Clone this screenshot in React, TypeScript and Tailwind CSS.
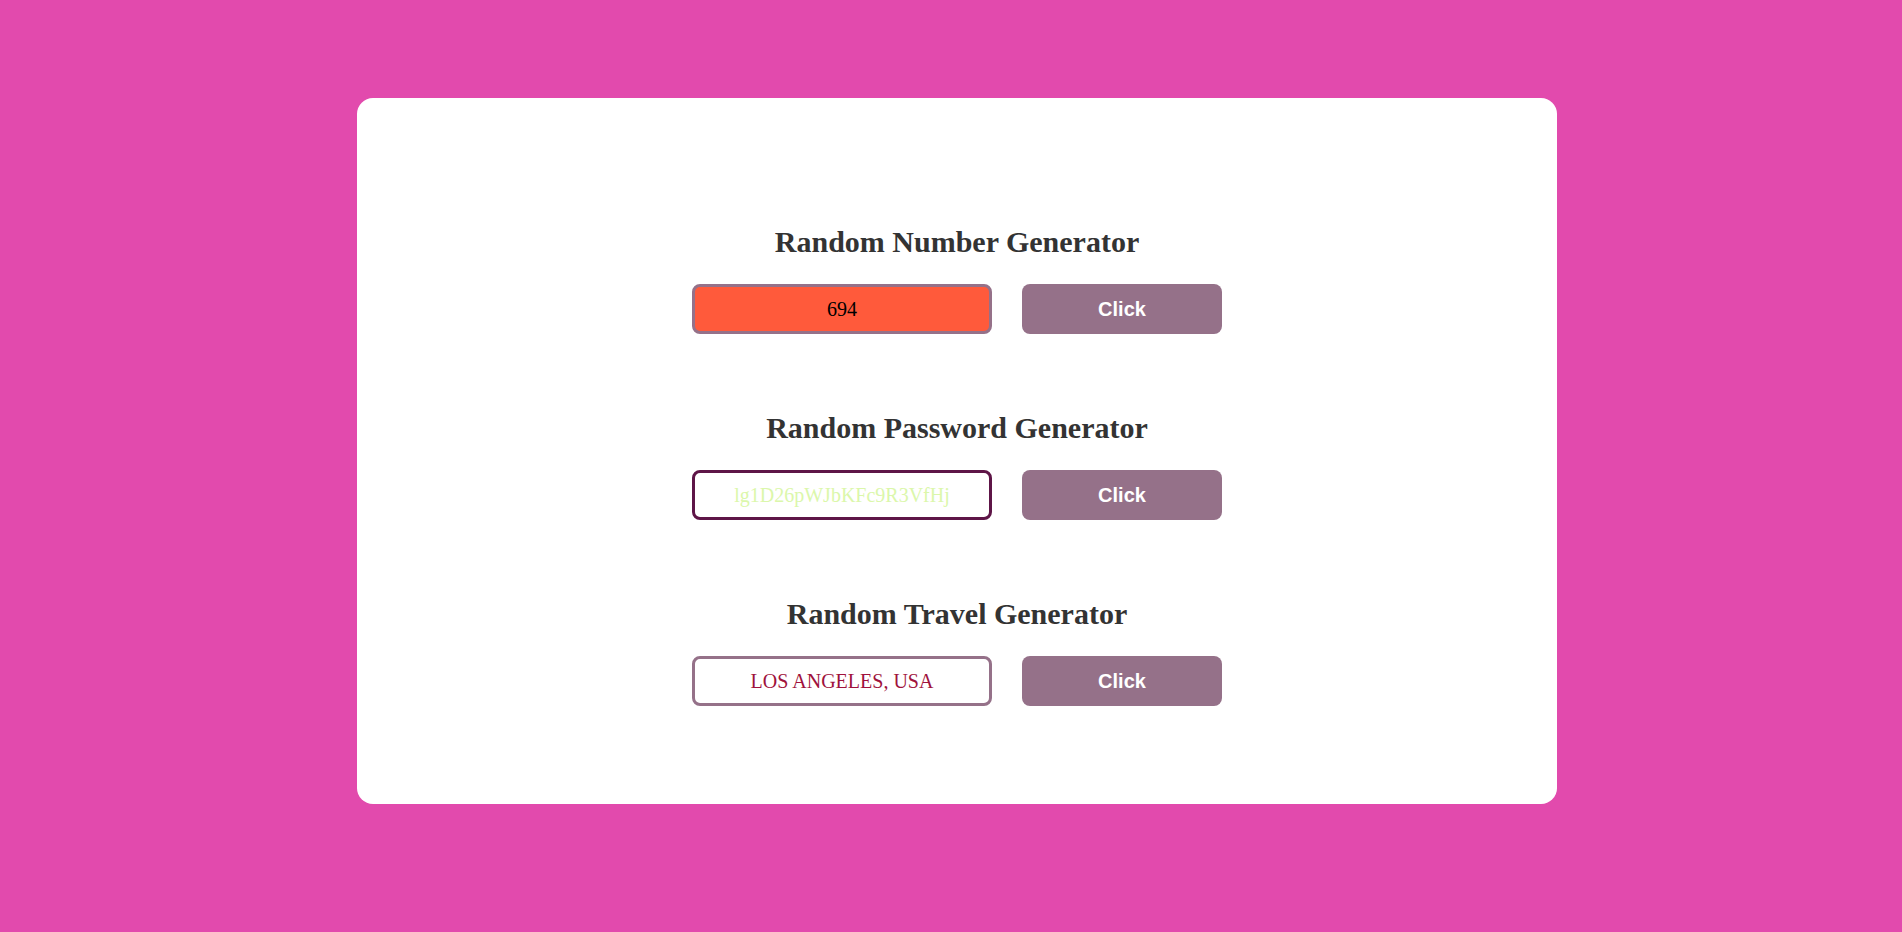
const sections = [
  {
    title: "Random Number Generator",
    value: "694",
    box: "bg-[#ff5a3b] border-[#957189] text-black",
  },
  {
    title: "Random Password Generator",
    value: "lg1D26pWJbKFc9R3VfHj",
    box: "bg-white border-[#5e1547] text-[#dbf7ab]",
  },
  {
    title: "Random Travel Generator",
    value: "LOS ANGELES, USA",
    box: "bg-white border-[#957189] text-[#a0123c]",
  },
];

export default function App() {
  return (
    <div className="min-h-[932px] w-full bg-[#e24aad] pl-[357px] pt-[98px] pb-[128px]">
      <div className="w-[1200px] rounded-2xl bg-white pt-[126px] pb-[98px] flex flex-col items-center gap-[76px] font-['Liberation_Serif',serif]">
        {sections.map((s) => (
          <section key={s.title} className="flex flex-col items-center gap-6">
            <h1 className="text-[30px] leading-9 font-bold text-[#333333]">{s.title}</h1>
            <div className="flex gap-[30px]">
              <div
                className={`w-[300px] h-[50px] border-[3px] rounded-lg flex items-center justify-center text-xl ${s.box}`}
              >
                {s.value}
              </div>
              <button className="w-[200px] h-[50px] rounded-lg bg-[#957189] text-white text-xl font-bold font-['Liberation_Sans',Arial,sans-serif]">
                Click
              </button>
            </div>
          </section>
        ))}
      </div>
    </div>
  );
}
